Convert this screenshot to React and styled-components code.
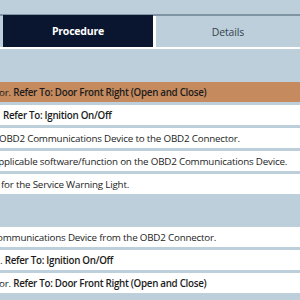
import React from "react";
import styled, { createGlobalStyle } from "styled-components";

const Global = createGlobalStyle`
  html, body { margin: 0; padding: 0; }
  body {
    width: 300px;
    height: 300px;
    overflow: hidden;
    background: #bccfda;
    font-family: "Open Sans", "Noto Sans", sans-serif;
  }
`;

const Page = styled.div`
  width: 300px;
  height: 300px;
  overflow: hidden;
  padding-top: 14px;
  box-sizing: border-box;
`;

const TabBar = styled.div`
  display: flex;
  height: 35px;
  box-sizing: border-box;
  border-top: 2px solid #7f95a4;
  border-bottom: 2px solid #ffffff;
  padding-left: 3px;
`;

const Tab = styled.div`
  display: flex;
  align-items: center;
  justify-content: center;
  ${(p) =>
    p.$active
      ? `
    width: 150px;
    background: #0a1630;
    color: #ffffff;
    font-size: 10.5px;
    font-weight: 700;
    letter-spacing: -0.2px;
    margin-top: -1px;
  `
      : `
    flex: 1;
    background: #bccfda;
    color: #34434f;
    font-size: 10.4px;
    font-weight: 400;
    letter-spacing: -0.1px;
    border-left: 3px solid #ffffff;
  `}
`;

const Group = styled.div`
  display: flex;
  flex-direction: column;
  gap: 3px;
  margin-top: 33px;
`;

const Row = styled.div`
  height: 20px;
  display: flex;
  align-items: center;
  white-space: nowrap;
  overflow: hidden;
  font-size: 9.8px;
  letter-spacing: -0.2px;
  color: #1c1c1c;
  background: ${(p) => (p.$highlight ? "#c58a5e" : "#ffffff")};
`;

const Text = styled.span`
  padding-left: ${(p) => Math.max(p.$shift, 0)}px;
  margin-left: ${(p) => Math.min(p.$shift, 0)}px;
`;

const Ref = styled.span`
  font-weight: 600;
  letter-spacing: -0.3px;
`;

const rowsA = [
  { lead: "or. ", ref: "Refer To: Door Front Right (Open and Close)", shift: -1, hl: true },
  { lead: "", ref: "Refer To: Ignition On/Off", shift: 3 },
  { lead: "OBD2 Communications Device to the OBD2 Connector.", shift: -1 },
  { lead: "applicable software/function on the OBD2 Communications Device.", shift: -7 },
  { lead: "for the Service Warning Light.", shift: 1 },
];

const rowsB = [
  { lead: "Communications Device from the OBD2 Connector.", shift: -9 },
  { lead: ". ", ref: "Refer To: Ignition On/Off", shift: 0 },
  { lead: "or. ", ref: "Refer To: Door Front Right (Open and Close)", shift: -1 },
];

function Rows({ rows }) {
  return (
    <Group>
      {rows.map((r, i) => (
        <Row key={i} $highlight={r.hl}>
          <Text $shift={r.shift}>
            {r.lead}
            {r.ref && <Ref>{r.ref}</Ref>}
          </Text>
        </Row>
      ))}
    </Group>
  );
}

export default function App() {
  return (
    <Page>
      <Global />
      <TabBar>
        <Tab $active>Procedure</Tab>
        <Tab>Details</Tab>
      </TabBar>
      <Rows rows={rowsA} />
      <Rows rows={rowsB} />
    </Page>
  );
}
